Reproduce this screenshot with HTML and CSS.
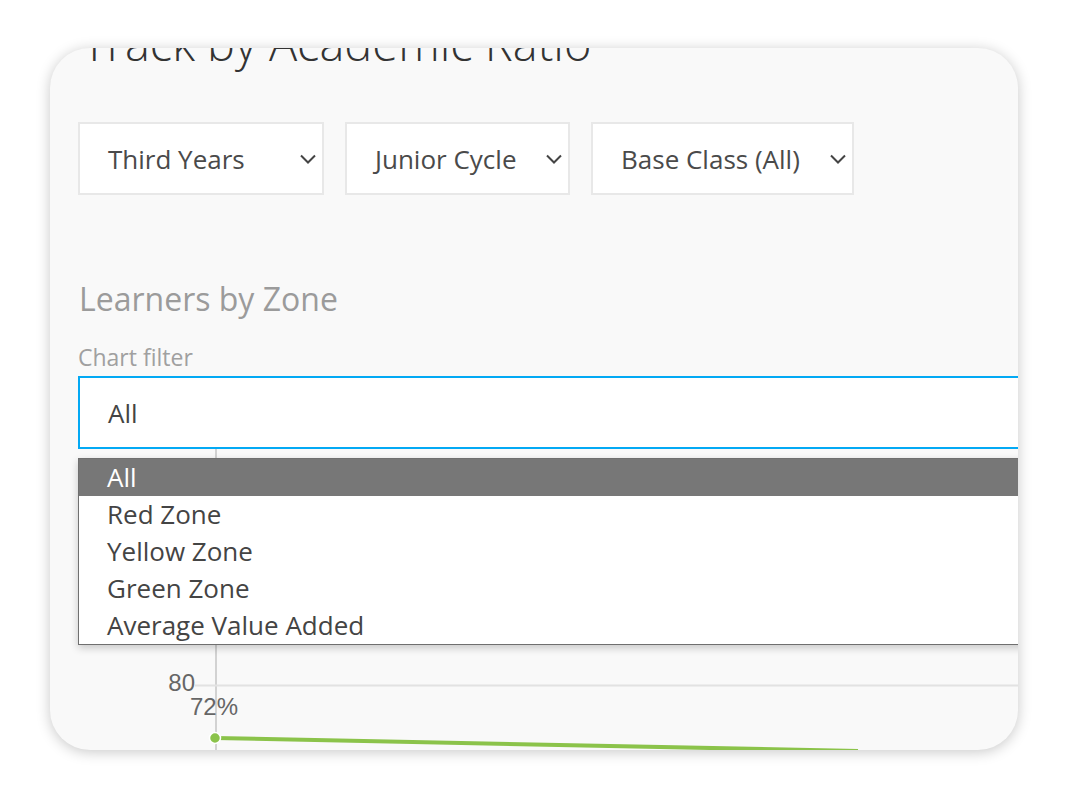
FILE: index.html
```html
<!DOCTYPE html>
<html>
<head>
<meta charset="utf-8">
<link rel="stylesheet" href="styles.css">
</head>
<body>
<div class="card">
  <div class="content">
    <h1 class="title">Track by Academic Ratio</h1>
    <div class="filters">
      <div class="select select-year"><span>Third Years</span><svg class="chev" width="16" height="10" viewBox="0 0 16 10"><path d="M1 1.5 L8 8.5 L15 1.5" fill="none" stroke="#444" stroke-width="2"/></svg></div>
      <div class="select select-cycle"><span>Junior Cycle</span><svg class="chev" width="16" height="10" viewBox="0 0 16 10"><path d="M1 1.5 L8 8.5 L15 1.5" fill="none" stroke="#444" stroke-width="2"/></svg></div>
      <div class="select select-class"><span>Base Class (All)</span><svg class="chev" width="16" height="10" viewBox="0 0 16 10"><path d="M1 1.5 L8 8.5 L15 1.5" fill="none" stroke="#444" stroke-width="2"/></svg></div>
    </div>
    <h2 class="section-title">Learners by Zone</h2>
    <div class="field-label">Chart filter</div>
    <div class="combo">
      <div class="combo-input">All</div>
      <ul class="combo-list">
        <li class="combo-item is-active">All</li>
        <li class="combo-item">Red Zone</li>
        <li class="combo-item">Yellow Zone</li>
        <li class="combo-item">Green Zone</li>
        <li class="combo-item">Average Value Added</li>
      </ul>
    </div>
    <svg class="chart" width="940" height="310" viewBox="0 0 940 310">
      <line x1="138" y1="0" x2="138" y2="310" stroke="#d2d2d2" stroke-width="2"/>
      <line x1="117" y1="236.5" x2="940" y2="236.5" stroke="#e2e2e2" stroke-width="2"/>
      <text x="117" y="242" text-anchor="end" class="axis-label">80</text>
      <text x="112" y="266" class="axis-label">72%</text>
      <line x1="137" y1="289" x2="780" y2="302" stroke="#8bc34a" stroke-width="4"/>
      <circle cx="137" cy="289" r="5.5" fill="#8bc34a" stroke="#fff" stroke-width="1.5"/>
    </svg>
  </div>
</div>
</body>
</html>
```
FILE: styles.css
```css
html, body {
  margin: 0;
  padding: 0;
  background: #ffffff;
}
body {
  width: 1068px;
  height: 800px;
  overflow: hidden;
  font-family: "Open Sans", "Noto Sans", sans-serif;
}
.card {
  margin: 48px 0 0 50px;
  width: 968px;
  height: 702px;
  background: #f9f9f9;
  border-radius: 40px;
  overflow: hidden;
  box-shadow: 0 2px 14px rgba(0, 0, 0, 0.22);
}
.content {
  padding-left: 28px;
  position: relative;
}
.title {
  margin: -28px 0 0 4px;
  font-size: 47px;
  line-height: 47px;
  font-weight: 300;
  color: #333;
  white-space: nowrap;
}
.filters {
  display: flex;
  gap: 21px;
  margin-top: 55px;
}
.select {
  box-sizing: border-box;
  height: 73px;
  background: #fff;
  border: 2px solid #e8e8e8;
  display: flex;
  align-items: center;
  justify-content: space-between;
  padding: 0 6px 0 28px;
  font-size: 26px;
  color: #4a4a4a;
}
.select-year { width: 246px; }
.select-cycle { width: 225px; }
.select-class { width: 263px; }
.chev { display: block; }
.section-title {
  margin: 86px 0 0 1px;
  font-size: 32px;
  line-height: 36px;
  font-weight: 400;
  color: #9b9b9b;
}
.field-label {
  margin-top: 28px;
  font-size: 23px;
  line-height: 25px;
  color: #a0a0a0;
}
.combo {
  position: relative;
  margin-top: 6px;
}
.combo-input {
  box-sizing: border-box;
  width: 1000px;
  height: 73px;
  background: #fff;
  border: 2px solid #03a9f4;
  display: flex;
  align-items: center;
  padding-left: 28px;
  font-size: 26px;
  color: #444;
}
.combo-list {
  position: absolute;
  left: 0;
  top: 82px;
  width: 1000px;
  margin: 0;
  padding: 0;
  list-style: none;
  background: #fff;
  border: 1px solid #6f6f6f;
  box-shadow: 0 3px 8px rgba(0, 0, 0, 0.2);
  z-index: 2;
}
.combo-item {
  height: 37px;
  line-height: 37px;
  padding-left: 28px;
  font-size: 26px;
  color: #444;
}
.combo-item.is-active {
  background: #777;
  color: #fff;
}
.chart {
  display: block;
}
.axis-label {
  font-family: "Liberation Sans", Arial, sans-serif;
  font-size: 24px;
  fill: #666;
}
```
